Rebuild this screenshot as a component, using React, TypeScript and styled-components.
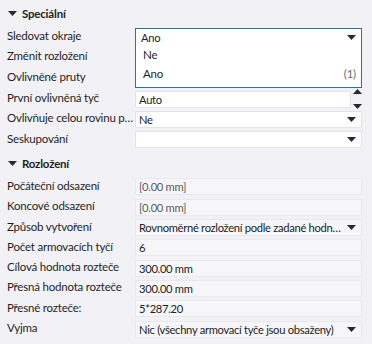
import React from "react";
import styled, { createGlobalStyle } from "styled-components";

const Global = createGlobalStyle`
  html, body { margin: 0; padding: 0; background: #f1f1f6; }
  body {
    font-family: Lato, "Open Sans", sans-serif;
    font-size: 11.5px;
    letter-spacing: -0.2px;
    color: #1f1f1f;
  }
`;

type Field = {
  label: string;
  value?: string;
  kind?: "select" | "spin" | "plain";
  tone?: "white" | "soft";
  muted?: boolean;
};

const special: Field[] = [
  { label: "Sledovat okraje", value: "Ano", kind: "select", tone: "white" },
  { label: "Změnit rozložení", value: "", kind: "plain", tone: "white" },
  { label: "Ovlivněné pruty", value: "", kind: "plain", tone: "white" },
  { label: "První ovlivněná tyč", value: "Auto", kind: "spin", tone: "white" },
  { label: "Ovlivňuje celou rovinu prutů", value: "Ne", kind: "select", tone: "white" },
  { label: "Seskupování", value: "", kind: "select", tone: "white" },
];

const layout: Field[] = [
  { label: "Počáteční odsazení", value: "[0.00 mm]", tone: "soft", muted: true },
  { label: "Koncové odsazení", value: "[0.00 mm]", tone: "soft", muted: true },
  { label: "Způsob vytvoření", value: "Rovnoměrné rozložení podle zadané hodnoty rozteče", kind: "select", tone: "soft" },
  { label: "Počet armovacích tyčí", value: "6", tone: "soft" },
  { label: "Cílová hodnota rozteče", value: "300.00 mm", tone: "soft" },
  { label: "Přesná hodnota rozteče", value: "300.00 mm", tone: "soft" },
  { label: "Přesné rozteče:", value: "5*287.20", tone: "soft" },
  { label: "Vyjma", value: "Nic (všechny armovací tyče jsou obsaženy)", kind: "select", tone: "soft" },
];

const Panel = styled.div`
  position: relative;
  width: 372px;
  height: 344px;
  box-sizing: border-box;
  padding: 0 10px 0 7px;
  overflow: hidden;
`;

const Header = styled.div<{ $h: number }>`
  height: ${(p) => p.$h}px;
  display: flex;
  align-items: center;
  gap: 5px;
  font-weight: 700;
  padding-left: 1px;
`;

const Row = styled.div<{ $tall?: boolean }>`
  display: grid;
  grid-template-columns: 128px minmax(0, 1fr);
  height: ${(p) => (p.$tall ? 21.8 : 20.3)}px;
  align-items: center;
`;

const Label = styled.div`
  white-space: nowrap;
  overflow: hidden;
  text-overflow: ellipsis;
  padding: 0 0 3px 0;
`;

const Box = styled.div<{ $tone: "white" | "soft"; $muted?: boolean; $narrow?: boolean }>`
  height: 17px;
  min-width: 0;
  box-sizing: border-box;
  margin-right: ${(p) => (p.$narrow ? 11 : 0)}px;
  background: ${(p) => (p.$tone === "white" ? "#ffffff" : "#f6f6f9")};
  border: 1px solid ${(p) => (p.$tone === "white" ? "#e2e2e8" : "#e8e8ee")};
  border-radius: 1px;
  display: flex;
  align-items: center;
  gap: 5px;
  padding: 0 5px 0 3px;
  color: ${(p) => (p.$muted ? "#5a5a5a" : "#222")};
`;

const Value = styled.span`
  flex: 1;
  min-width: 0;
  font-size: 11.2px;
  letter-spacing: -0.3px;
  white-space: nowrap;
  overflow: hidden;
  text-overflow: ellipsis;
`;

const Cell = styled.div`
  position: relative;
  min-width: 0;
`;

const Spinner = styled.div`
  position: absolute;
  right: 0;
  top: -2px;
  width: 10px;
  height: 20px;
  display: flex;
  flex-direction: column;
  align-items: center;
  justify-content: space-between;
`;

const Popup = styled.div`
  position: absolute;
  left: 135px;
  top: 28px;
  width: 227px;
  height: 60px;
  box-sizing: border-box;
  background: #fff;
  border: 1px solid #2f6f9f;
  padding: 0 5px 0 5px;
`;

const PopupRow = styled.div<{ $h: number; $indent?: number }>`
  height: ${(p) => p.$h}px;
  display: flex;
  align-items: center;
  padding-left: ${(p) => p.$indent ?? 0}px;
`;

const Count = styled.span`
  margin-left: auto;
  color: #6d6d6d;
`;

function Caret({ up }: { up?: boolean }) {
  return (
    <svg width="9" height="5" viewBox="0 0 9 5" style={{ flex: "none" }}>
      <path d={up ? "M0 5 L4.5 0 L9 5 Z" : "M0 0 L9 0 L4.5 5 Z"} fill="#2a2a2a" />
    </svg>
  );
}

function FieldRow({ f, tall }: { f: Field; tall?: boolean }) {
  return (
    <Row $tall={tall}>
      <Label>{f.label}</Label>
      <Cell>
        <Box $tone={f.tone ?? "soft"} $muted={f.muted} $narrow={f.kind === "spin"}>
          <Value>{f.value}</Value>
          {f.kind === "select" && <Caret />}
        </Box>
        {f.kind === "spin" && (
          <Spinner>
            <Caret up />
            <Caret />
          </Spinner>
        )}
      </Cell>
    </Row>
  );
}

export default function App() {
  return (
    <>
      <Global />
      <Panel>
        <Header $h={26.5}>
          <Caret />
          Speciální
        </Header>
        {special.map((f, i) => (
          <FieldRow key={f.label} f={f} tall={i === 2} />
        ))}
        <Header $h={27}>
          <Caret />
          Rozložení
        </Header>
        {layout.map((f) => (
          <FieldRow key={f.label} f={f} />
        ))}
        <Popup>
          <PopupRow $h={16}>
            <Value>Ano</Value>
            <Caret />
          </PopupRow>
          <PopupRow $h={19} $indent={2}>Ne</PopupRow>
          <PopupRow $h={19} $indent={2}>
            Ano
            <Count>(1)</Count>
          </PopupRow>
        </Popup>
      </Panel>
    </>
  );
}
